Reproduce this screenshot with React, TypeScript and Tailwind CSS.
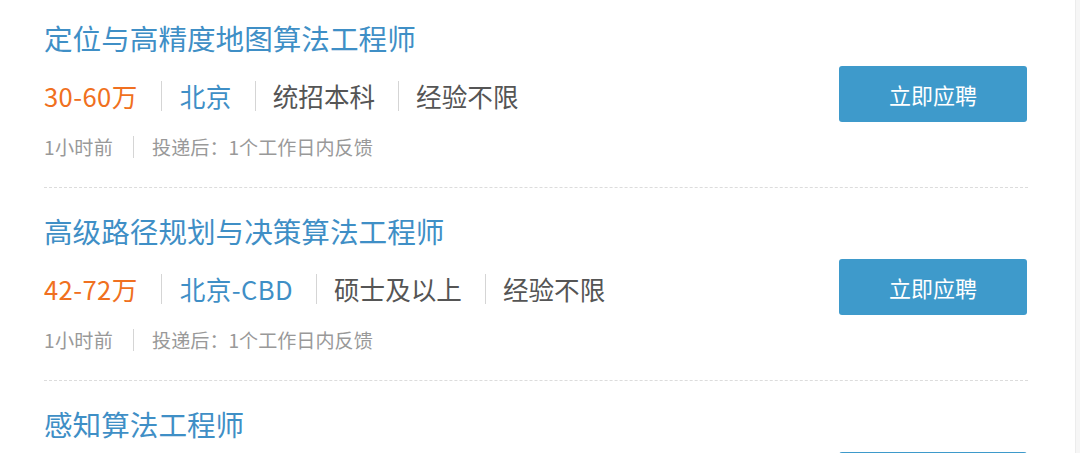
import React from "react";

type Job = {
  title: string;
  salary: string;
  city: string;
  edu: string;
  exp: string;
  time: string;
  feedback: string;
};

const jobs: Job[] = [
  { title: "定位与高精度地图算法工程师", salary: "30-60万", city: "北京", edu: "统招本科", exp: "经验不限", time: "1小时前", feedback: "投递后：1个工作日内反馈" },
  { title: "高级路径规划与决策算法工程师", salary: "42-72万", city: "北京-CBD", edu: "硕士及以上", exp: "经验不限", time: "1小时前", feedback: "投递后：1个工作日内反馈" },
  { title: "感知算法工程师", salary: "35-65万", city: "北京", edu: "硕士及以上", exp: "经验不限", time: "1小时前", feedback: "投递后：1个工作日内反馈" },
];

function Sep({ h }: { h: string }) {
  return <span className={`w-px bg-[#d5d5d5] ${h}`} />;
}

export default function App() {
  return (
    <div
      className="flex h-[453px] w-[1080px] overflow-hidden bg-white"
      style={{ fontFamily: '"Noto Sans CJK SC", "Noto Sans", sans-serif' }}
    >
      <div className="flex-1 pl-[44px] pr-[47px]">
        {jobs.map((j, i) => (
          <div
            key={i}
            className={`flex items-start justify-between border-b border-dashed border-[#dcdcdc] pb-[28px] ${i === 0 ? "pt-[18px]" : "pt-[23px]"}`}
          >
            <div className="flex flex-col">
              <div className="h-[40px] whitespace-nowrap text-[28.6px] leading-[40px] text-[#3f8fc6]">{j.title}</div>
              <div className="mt-[20px] flex h-[36px] items-center whitespace-nowrap text-[25.6px] leading-[36px]">
                <span className="tracking-[0.4px] text-[#f07020]">{j.salary}</span>
                <span className="ml-[23px] mr-[18px] flex items-center"><Sep h="h-[30px]" /></span>
                <span className="tracking-[0.4px] text-[#3f8fc6]">{j.city}</span>
                <span className="ml-[23px] mr-[17px] flex items-center"><Sep h="h-[30px]" /></span>
                <span className="text-[#555555]">{j.edu}</span>
                <span className="ml-[23px] mr-[17px] flex items-center"><Sep h="h-[30px]" /></span>
                <span className="text-[#555555]">{j.exp}</span>
              </div>
              <div className="mt-[21px] flex h-[24px] items-center whitespace-nowrap text-[19.1px] leading-[24px] text-[#999999]">
                <span className="tracking-[0.3px]">{j.time}</span>
                <span className="ml-[20px] mr-[18px] flex items-center"><Sep h="h-[22px]" /></span>
                <span>{j.feedback}</span>
              </div>
            </div>
            <button className="mr-[1px] mt-[48px] h-[56px] w-[188px] rounded-[3px] bg-[#3e9acb] text-[22px] text-white">
              立即应聘
            </button>
          </div>
        ))}
      </div>
      <div className="w-[5px] border-l border-[#ececec] bg-[#f6f6f6]" />
    </div>
  );
}
